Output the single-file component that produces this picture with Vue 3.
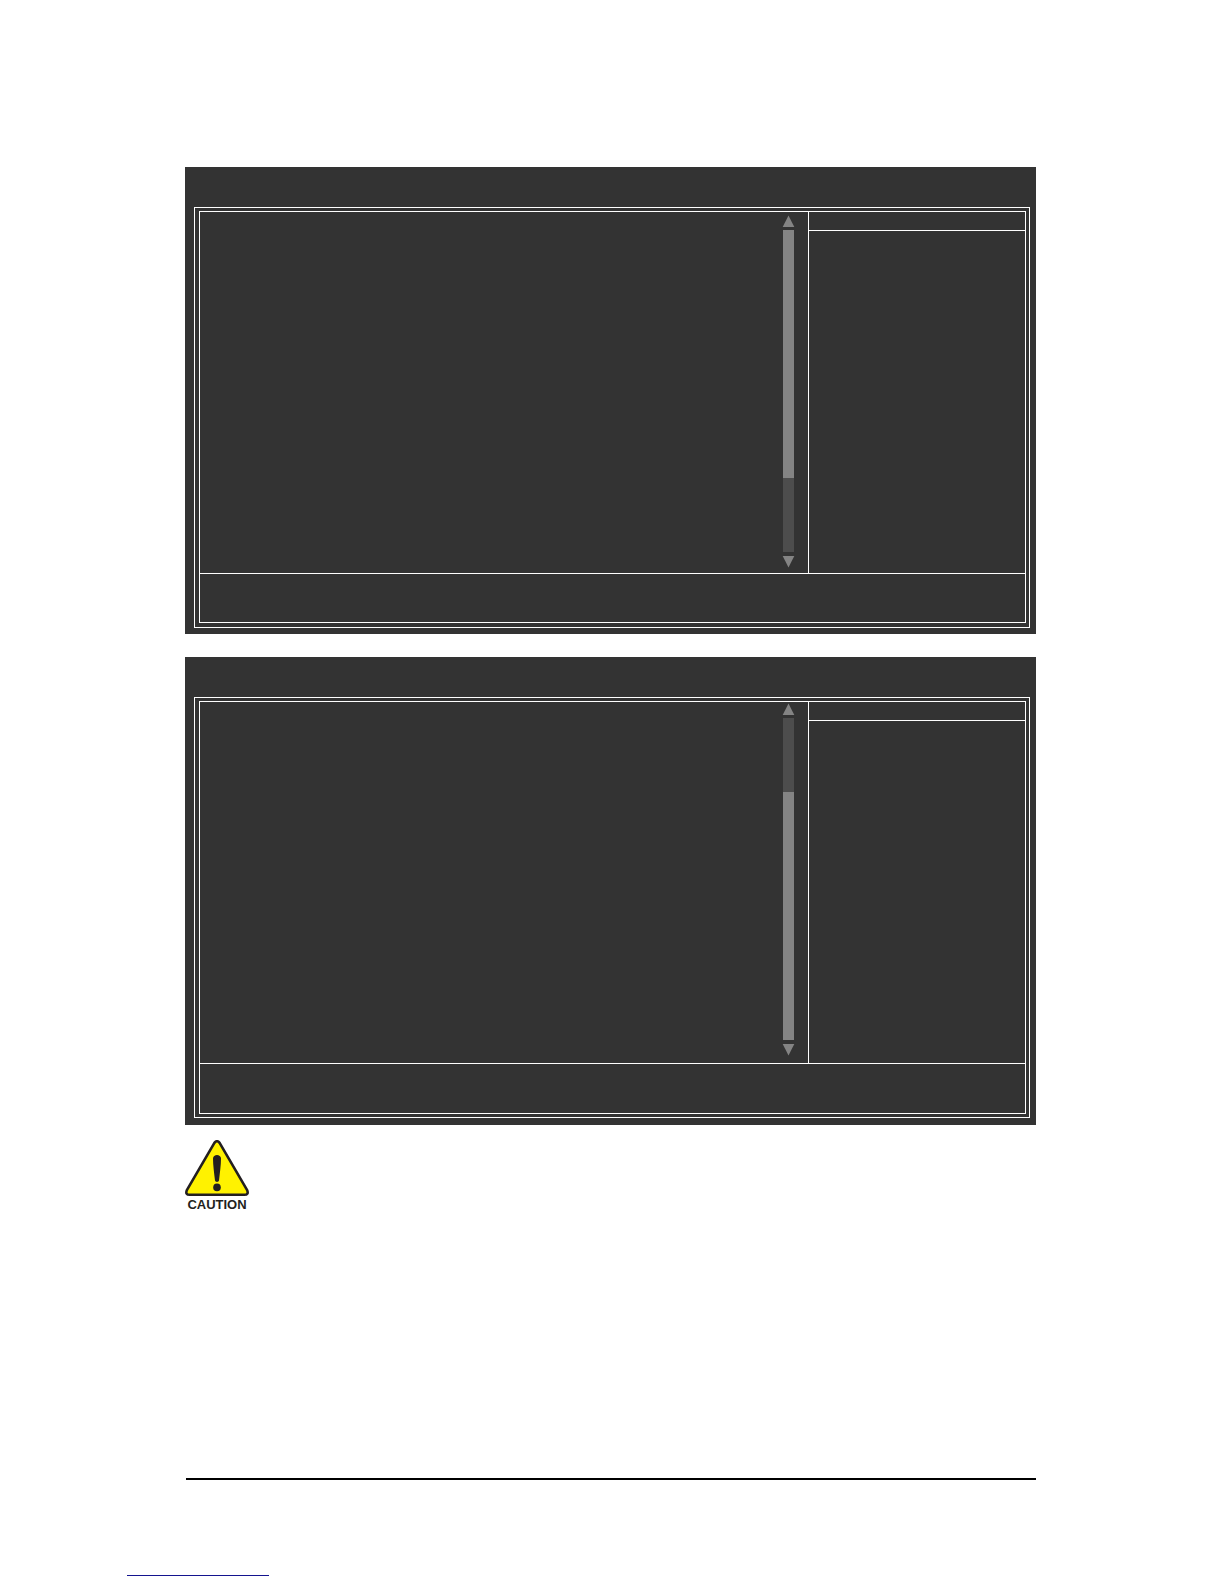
<script setup>
// share of the scroll track above and below the thumb
const screens = [
  { id: 'first', before: 0, thumb: 248, after: 74 },
  { id: 'second', before: 74, thumb: 248, after: 0 }
]
</script>

<template>
  <div class="page">
    <main class="content">
      <section v-for="screen in screens" :key="screen.id" class="screen" :class="screen.id">
        <div class="frame">
          <div class="inner">
            <div class="body">
              <div class="main-pane">
                <div class="scrollbar">
                  <svg class="arrow" viewBox="0 0 11 11"><path d="M5.5 -0.5 L11.3 11 H-0.3 Z" /></svg>
                  <div class="track">
                    <div :style="{ flexGrow: screen.before }"></div>
                    <div class="thumb" :style="{ flexGrow: screen.thumb }"></div>
                    <div :style="{ flexGrow: screen.after }"></div>
                  </div>
                  <svg class="arrow" viewBox="0 0 11 11"><path d="M-0.3 0 H11.3 L5.5 11.5 Z" /></svg>
                </div>
              </div>
              <aside class="side-pane">
                <div class="side-title"></div>
              </aside>
            </div>
            <div class="keys"></div>
          </div>
        </div>
      </section>

      <div class="caution">
        <svg class="caution-icon" viewBox="0 0 64 57">
          <path d="M29.4 2.9 Q32 -0.6 34.6 2.9 L62 49.8 Q64.2 54.8 59.2 54.8 H4.8 Q-0.2 54.8 2 49.8 Z" fill="#fff200" stroke="#231f20" stroke-width="2.6" stroke-linejoin="round" />
          <path d="M28 18.4 C28 13.7 36 13.7 36 18.4 C36 25 34.8 33 34 40.6 C33.8 42.4 30.2 42.4 30 40.6 C29.2 33 28 25 28 18.4 Z" fill="#231f20" />
          <circle cx="32" cy="47.4" r="3.8" fill="#231f20" />
        </svg>
        <span class="caution-label">CAUTION</span>
      </div>
    </main>

    <hr class="rule" />
    <div class="link-line"></div>
  </div>
</template>

<style>
body {
  background: #fff;
}
</style>

<style scoped>
.page {
  box-sizing: border-box;
  min-height: 100vh;
  padding: 167px 188px 8px 185px;
  display: flex;
  flex-direction: column;
}

.content {
  display: flex;
  flex-direction: column;
}

/*===== setup screens =====*/

.screen {
  background: #333;
  padding: 40px 6px 6px 9px;
  margin-bottom: 23px;
}

.second {
  padding-bottom: 7px;
  margin-bottom: 15px;
}

.frame {
  border: 1px solid #fff;
  padding: 3px 3px 4px 4px;
}

.second .frame {
  padding-bottom: 3px;
}

.inner {
  border: 1px solid #fff;
}

.body {
  display: flex;
  border-bottom: 1px solid #fff;
}

.main-pane {
  flex: 1;
  display: flex;
  justify-content: flex-end;
  padding: 4px 14px 6px;
}

.second .main-pane {
  padding: 2px 14px 8px;
}

.side-pane {
  width: 216px;
  border-left: 1px solid #fff;
}

.side-title {
  height: 18px;
  border-bottom: 1px solid #fff;
}

.keys {
  height: 48px;
}

.second .keys {
  height: 49px;
}

.scrollbar {
  width: 11px;
  display: flex;
  flex-direction: column;
}

.arrow {
  display: block;
  width: 11px;
  height: 11px;
  overflow: visible;
  fill: #848484;
}

.track {
  height: 322px;
  margin: 3px 0 4px;
  display: flex;
  flex-direction: column;
  background: #4d4d4d;
}

.thumb {
  background: #848484;
}

/*===== caution sign =====*/

.caution {
  width: 64px;
  display: flex;
  flex-direction: column;
  align-items: center;
}

.caution-icon {
  display: block;
  width: 64px;
  height: 57px;
}

.caution-label {
  font-family: "Liberation Sans", Arial, sans-serif;
  font-size: 13px;
  font-weight: bold;
  line-height: 16px;
  color: #231f20;
}

/*===== page foot =====*/

.rule {
  align-self: stretch;
  height: 2px;
  margin: auto 0 95px 1px;
  border: none;
  background: #000;
}

.link-line {
  width: 142px;
  height: 1px;
  margin-left: -58px;
  flex-shrink: 0;
  background: #14148f;
}
</style>
